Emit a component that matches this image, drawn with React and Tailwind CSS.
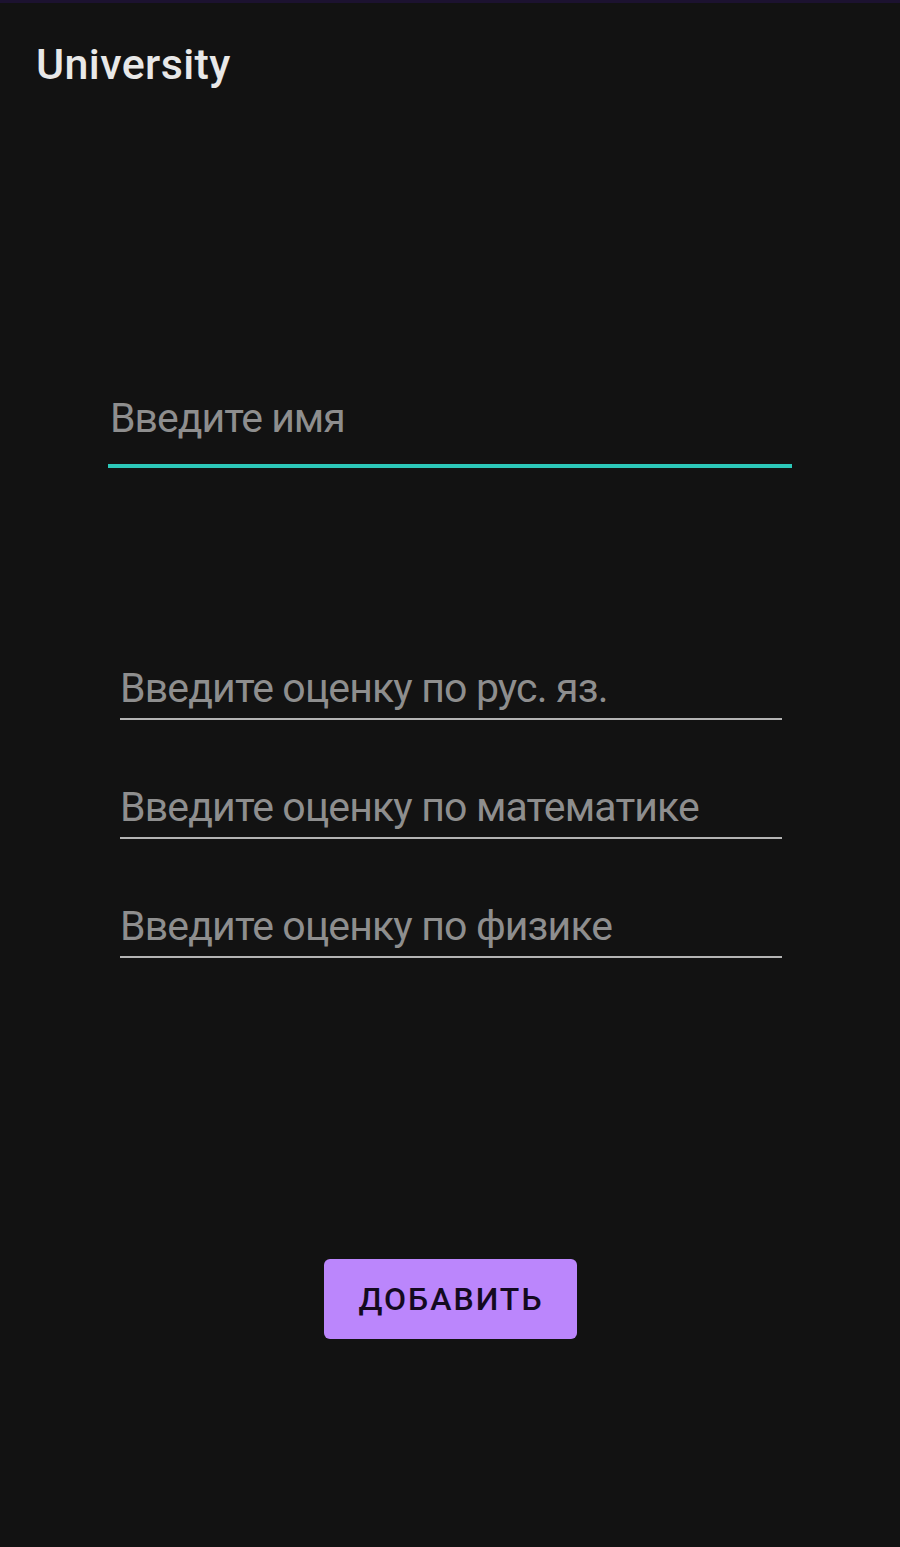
import React from "react";

const fields = [
  "Введите оценку по рус. яз.",
  "Введите оценку по математике",
  "Введите оценку по физике",
];

export default function App() {
  return (
    <div className="w-full h-[1547px] bg-[#121212] font-['Roboto','Liberation_Sans',sans-serif] flex flex-col">
      <div className="h-[3px] bg-[#1c1230]" />

      {/* Toolbar title */}
      <h1 className="mt-[40px] ml-[36px] text-[43px] leading-none font-medium tracking-[0.4px] text-[#e8e8e8]">
        University
      </h1>

      {/* Name field (focused) */}
      <div className="mt-[312px] ml-[108px] w-[684px] border-b-4 border-[#2cc8b9] pb-[25px] pl-[2px]">
        <div className="text-[41px] leading-none tracking-[-1px] text-[#8e8e8e]">Введите имя</div>
      </div>

      {/* Grade fields */}
      <div className="mt-[200px] ml-[120px] w-[662px] flex flex-col gap-[67px]">
        {fields.map((label) => (
          <div key={label} className="border-b-2 border-[#b4b4b4] pb-[9px]">
            <div className="text-[41px] leading-none tracking-[-0.85px] text-[#8e8e8e]">{label}</div>
          </div>
        ))}
      </div>

      <div className="mt-[301px] flex justify-center">
        <button className="w-[253px] h-[80px] rounded-[6px] bg-[#bb86fc] text-[#140a1f] text-[32px] font-medium tracking-[2px] pl-[2px]">
          ДОБАВИТЬ
        </button>
      </div>
    </div>
  );
}
